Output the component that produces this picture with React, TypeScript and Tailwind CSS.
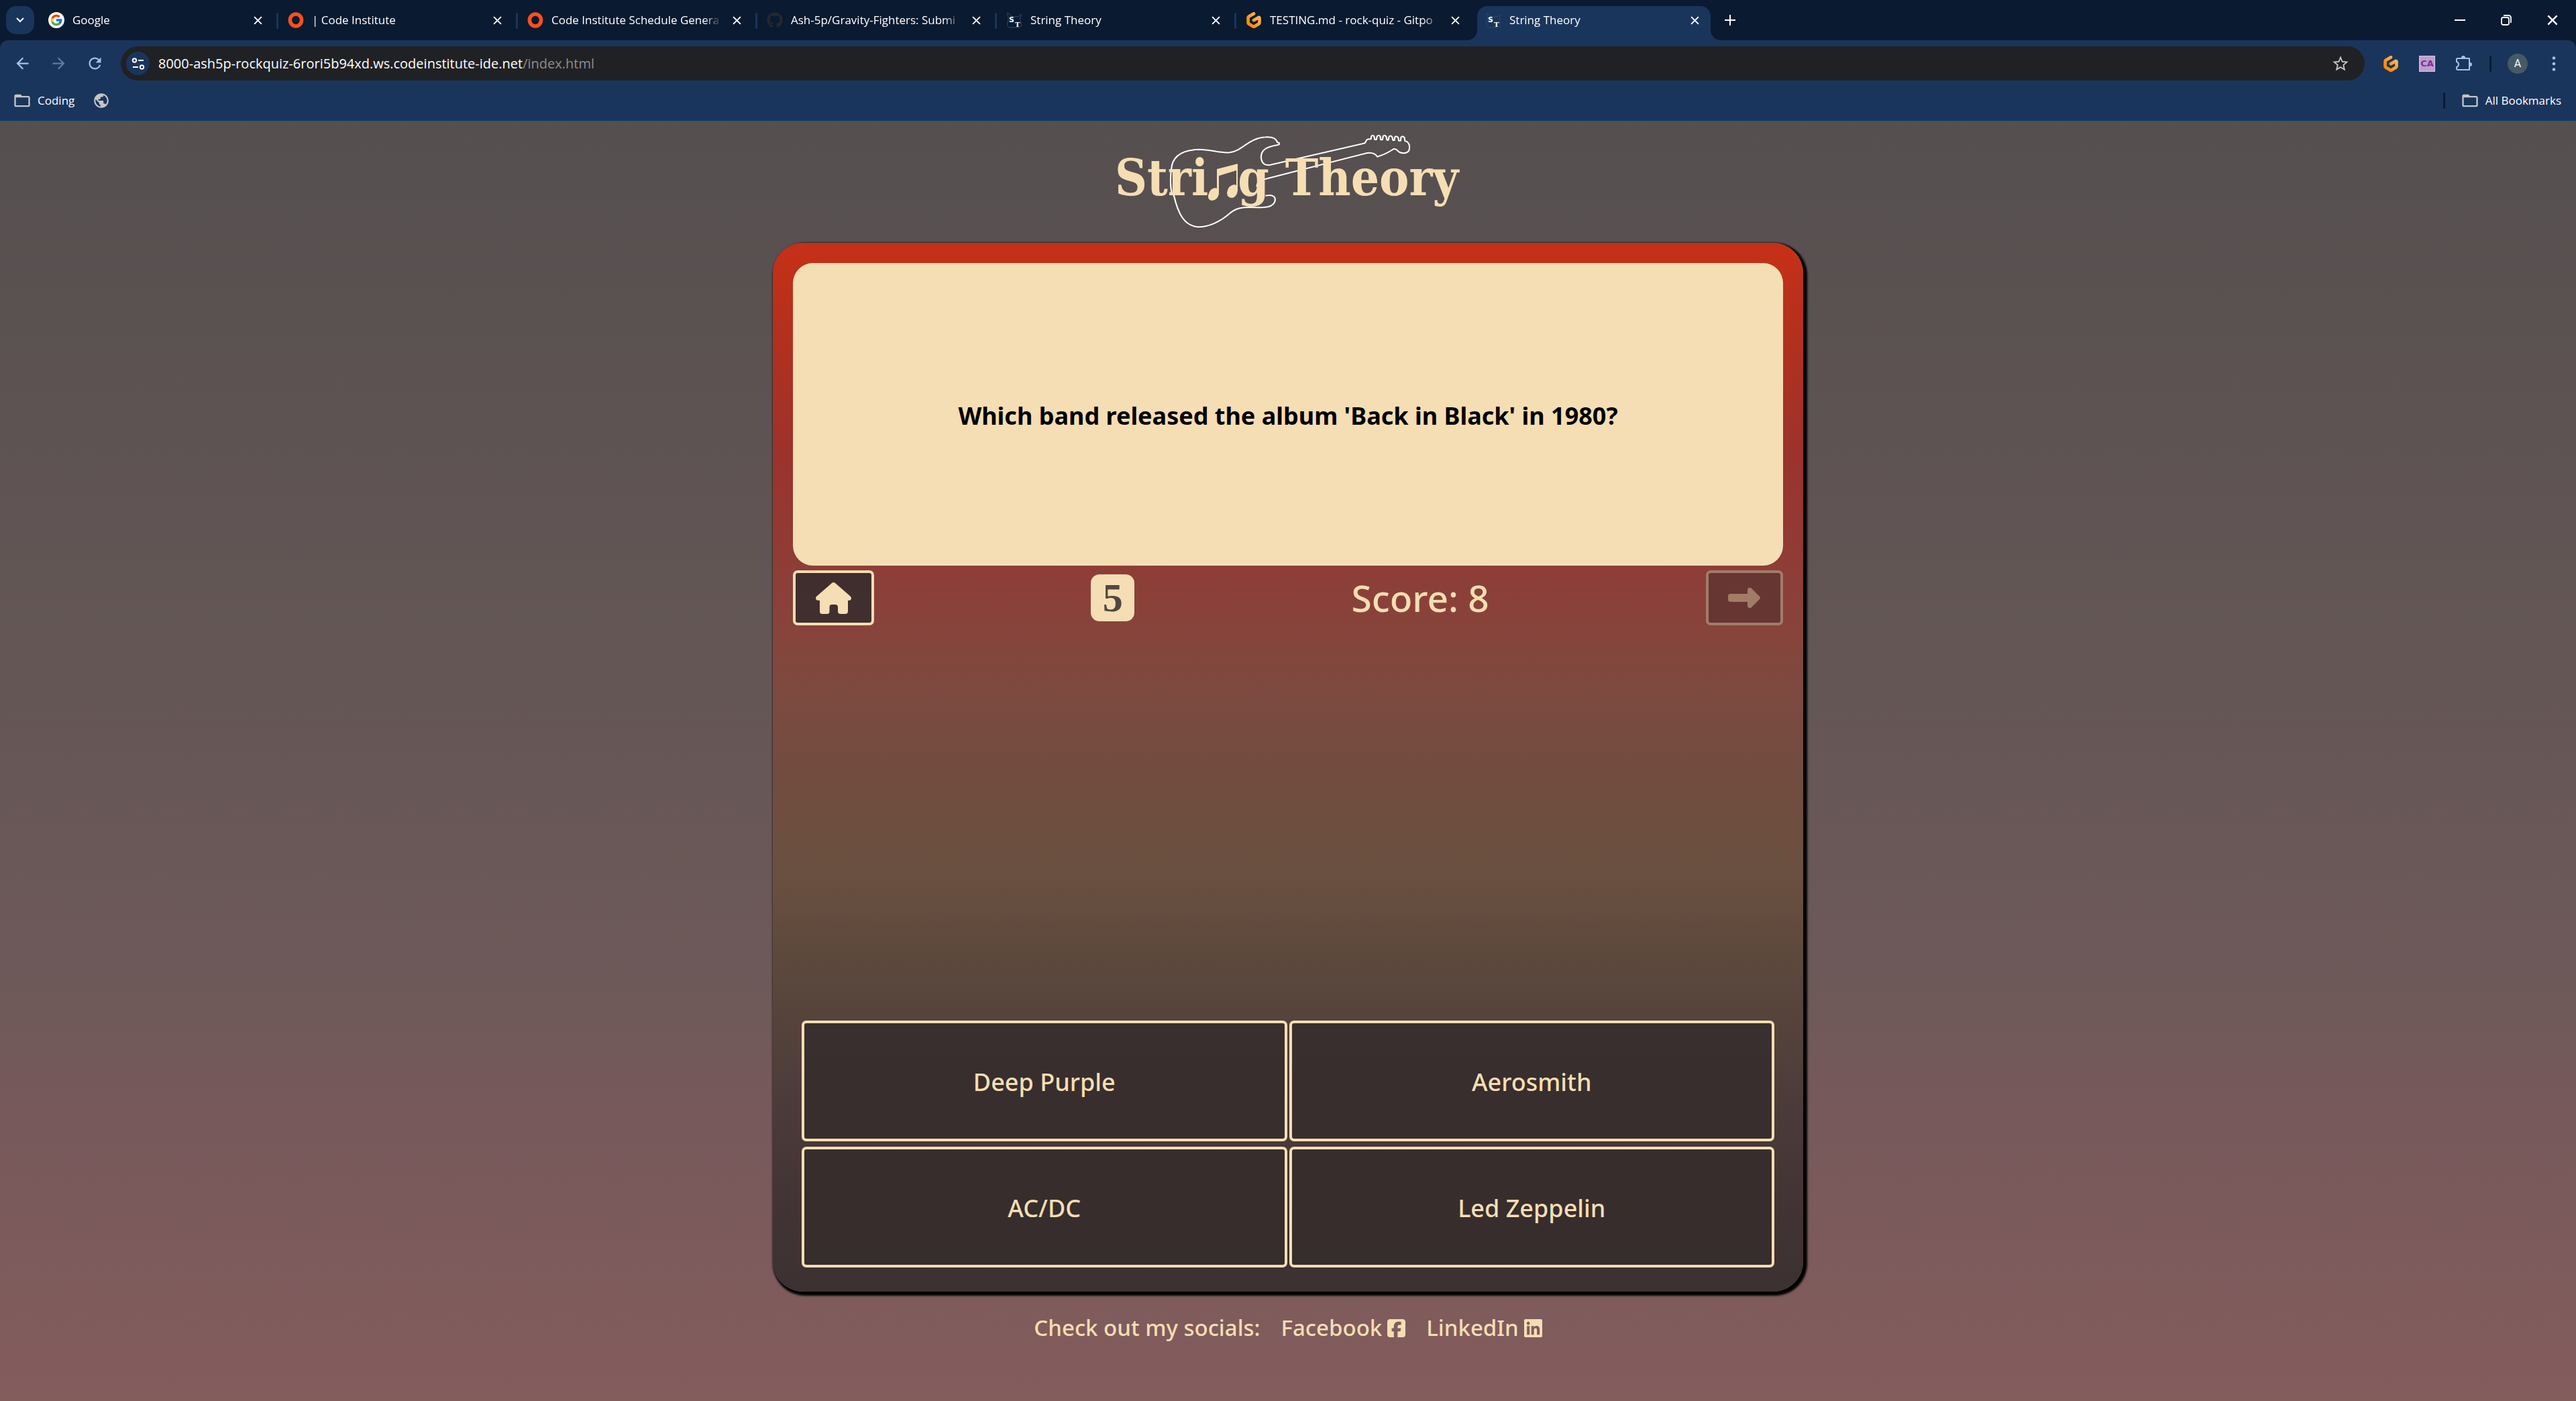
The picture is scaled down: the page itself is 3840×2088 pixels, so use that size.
import React from "react";
import { FcGoogle } from "react-icons/fc";
import { FaGithub, FaLinkedin, FaSquareFacebook } from "react-icons/fa6";
import { SiGitpod } from "react-icons/si";
import {
  MdArrowBack,
  MdArrowForward,
  MdFolderOpen,
  MdPublic,
  MdRefresh,
  MdStarBorder,
} from "react-icons/md";

type IconName = "google" | "ring" | "github" | "guitar" | "gitpod";

const tabs: { title: string; icon: IconName; active?: boolean }[] = [
  { title: "Google", icon: "google" },
  { title: "| Code Institute", icon: "ring" },
  { title: "Code Institute Schedule Genera", icon: "ring" },
  { title: "Ash-5p/Gravity-Fighters: Submi", icon: "github" },
  { title: "String Theory", icon: "guitar" },
  { title: "TESTING.md - rock-quiz - Gitpo", icon: "gitpod" },
  { title: "String Theory", icon: "guitar", active: true },
];

const answers = ["Deep Purple", "Aerosmith", "AC/DC", "Led Zeppelin"];

function Gitpod() {
  return (
    <span className="flex shrink-0">
      <svg width="0" height="0" aria-hidden="true">
        <linearGradient id="gitpod" x1="1" y1="0" x2="0" y2="1">
          <stop offset="0.2" stopColor="#ffb45b" />
          <stop offset="0.8" stopColor="#ff8a00" />
        </linearGradient>
      </svg>
      <SiGitpod className="size-6" fill="url(#gitpod)" />
    </span>
  );
}

function TabIcon({ name }: { name: IconName }) {
  if (name === "google")
    return (
      <span className="flex size-6 shrink-0 items-center justify-center rounded-full bg-white">
        <FcGoogle className="size-5" />
      </span>
    );
  if (name === "ring")
    return (
      <svg viewBox="0 0 24 24" className="size-6 shrink-0" aria-hidden="true">
        <ellipse cx="12" cy="12" rx="8.6" ry="9" fill="none" stroke="#fb4f1e" strokeWidth="5.6" />
      </svg>
    );
  if (name === "github") return <FaGithub className="size-6 shrink-0 text-[#24292e]" />;
  if (name === "gitpod") return <Gitpod />;
  return (
    <svg viewBox="0 0 24 24" className="size-6 shrink-0" aria-hidden="true">
      <path
        d="M2 1q-1 4 1 6 1 3-1 8-2 8 4 8h12q6 0 4-8-2-4-1-7 2-3 1-5-2 4-5 4-3-1-4 0-3 1-5-1-3-2-6-5z"
        fill="none"
        stroke="#33486a"
        strokeWidth="1"
      />
      <text x="4" y="15" fontSize="11" fontWeight="700" fill="#fff" fontFamily="DejaVu Sans, sans-serif">
        S
      </text>
      <text x="13" y="22" fontSize="10" fontWeight="700" fill="#fff" fontFamily="DejaVu Serif, serif">
        T
      </text>
    </svg>
  );
}

function Cross({ className }: { className: string }) {
  return (
    <svg viewBox="0 0 12 12" className={className} aria-hidden="true">
      <path d="M1 1l10 10M11 1L1 11" stroke="currentColor" strokeWidth="1.8" fill="none" />
    </svg>
  );
}

function Flare({ className }: { className: string }) {
  return (
    <svg viewBox="0 0 15 15" className={className} aria-hidden="true">
      <path d="M15 0v15H0A15 15 0 0 0 15 0z" fill="#1a355b" />
    </svg>
  );
}

function TabStrip() {
  return (
    <div className="flex h-[60px] items-end">
      <button
        aria-label="Search tabs"
        className="mr-[4px] mb-[9px] ml-[9px] flex size-[42px] shrink-0 items-center justify-center rounded-[15px] bg-[#1a355b]"
      >
        <svg viewBox="0 0 12 8" className="h-2 w-3" aria-hidden="true">
          <path d="M1 1l5 5 5-5" stroke="currentColor" strokeWidth="2" fill="none" />
        </svg>
      </button>
      <nav className="flex min-w-0">
        {tabs.map((tab, i) => (
          <div
            key={i}
            className={
              "relative flex h-[51px] w-[357px] items-center pb-[9px] " +
              (tab.active ? "pl-[5px]" : "pl-[17px]")
            }
          >
            {i > 0 && !tab.active && (
              <span className="absolute top-[10px] left-0 h-[24px] w-[3px] rounded bg-[#1a355b]" />
            )}
            <div
              className={
                tab.active
                  ? "relative mr-[4px] -mb-[9px] flex h-[51px] min-w-0 flex-1 items-center rounded-t-[15px] bg-[#1a355b] pr-[17px] pb-[9px] pl-[12px]"
                  : "flex min-w-0 flex-1 items-center pr-[21px]"
              }
            >
              {tab.active && <Flare className="absolute bottom-0 -left-[15px] size-[15px]" />}
              {tab.active && <Flare className="absolute -right-[15px] bottom-0 size-[15px] -scale-x-100" />}
              <TabIcon name={tab.icon} />
              <a
                href="#tab"
                className="mr-[16px] ml-[12px] min-w-0 flex-1 overflow-hidden text-[17px] leading-6 whitespace-nowrap [mask-image:linear-gradient(to_right,#000_calc(100%-26px),transparent)]"
              >
                {tab.title}
              </a>
              <button aria-label={"Close " + tab.title}>
                <Cross className="size-[13px]" />
              </button>
            </div>
          </div>
        ))}
      </nav>
      <button aria-label="New tab" className="mb-[22px] ml-[17px]">
        <svg viewBox="0 0 16 16" className="size-4" aria-hidden="true">
          <path d="M8 0v16M0 8h16" stroke="currentColor" strokeWidth="2" />
        </svg>
      </button>
      <div className="mr-[27px] mb-[22px] ml-auto flex items-center gap-[53px]">
        <button aria-label="Minimise">
          <svg viewBox="0 0 16 16" className="size-4" aria-hidden="true">
            <path d="M0 8h16" stroke="currentColor" strokeWidth="2" />
          </svg>
        </button>
        <button aria-label="Restore">
          <svg viewBox="0 0 16 16" className="size-4" aria-hidden="true">
            <rect x="1" y="4" width="11" height="11" rx="2.5" fill="none" stroke="currentColor" strokeWidth="1.8" />
            <path d="M4 1.5Q5 1 6 1h5q4 0 4 4v5q0 1-.6 2" fill="none" stroke="currentColor" strokeWidth="1.8" />
          </svg>
        </button>
        <button aria-label="Close window">
          <Cross className="size-4" />
        </button>
      </div>
    </div>
  );
}

function AddressBar() {
  return (
    <div className="flex h-[69px] items-center rounded-t-[12px] bg-[#1a355b] pr-[26px] pl-[20px] text-[#a8c0e8]">
      <button aria-label="Back">
        <MdArrowBack className="size-[27px]" />
      </button>
      <button aria-label="Forward" className="ml-[27px] text-[#5f7aa3]">
        <MdArrowForward className="size-[27px]" />
      </button>
      <button aria-label="Reload" className="ml-[27px]">
        <MdRefresh className="size-[27px]" />
      </button>
      <div className="ml-[25px] flex h-[51px] min-w-0 flex-1 items-center rounded-full bg-[#202124] pr-[22px] pl-[8px]">
        <button
          aria-label="Site information"
          className="flex size-[35px] shrink-0 items-center justify-center rounded-full bg-[#1a355b] text-white"
        >
          <svg viewBox="0 0 20 18" className="h-[18px] w-5" fill="none" stroke="currentColor" strokeWidth="2" aria-hidden="true">
            <circle cx="4.500" cy="4" r="2.700" />
            <path d="M10 4h8M2 14h8" />
            <circle cx="15.500" cy="14" r="2.700" />
          </svg>
        </button>
        <a href="#address" className="ml-[13px] text-[20px] leading-7 text-[#8b8e92]">
          <span className="text-white">8000-ash5p-rockquiz-6rori5b94xd.ws.codeinstitute-ide.net</span>/index.html
        </a>
        <button aria-label="Bookmark this page" className="ml-auto text-[#c4c5c7]">
          <MdStarBorder className="size-7" />
        </button>
      </div>
      <button aria-label="Gitpod" className="ml-[27px]">
        <Gitpod />
      </button>
      <button
        aria-label="CA extension"
        className="ml-[30px] flex size-6 items-center justify-center border border-[#d9c3e6] bg-[#bc9fce] font-['DejaVu_Sans'] text-[13px] font-bold text-[#7b2d96]"
      >
        CA
      </button>
      <button aria-label="Extensions" className="ml-[30px]">
        <svg viewBox="0 0 26 26" className="size-[26px]" fill="none" stroke="currentColor" strokeWidth="2" aria-hidden="true">
          <path d="M4 5H21V22H4Q2 22 2 20V18Q5 17 5 14 5 11 2 10V6Q2 5 4 5z" strokeLinejoin="round" />
          <path d="M9 4a3 3 0 0 1 6 0zM22 11a3 3 0 0 1 0 6z" fill="currentColor" stroke="none" />
        </svg>
      </button>
      <span className="ml-[25px] h-6 w-[3px] rounded bg-[#0a1a31]" />
      <button
        aria-label="Profile"
        className="ml-[24px] flex size-[30px] items-center justify-center rounded-full bg-[#455a64] font-['Roboto'] text-[16px] text-white"
      >
        A
      </button>
      <button aria-label="Menu" className="ml-[32px]">
        <svg viewBox="0 0 14 24" className="h-6 w-[14px]" fill="currentColor" aria-hidden="true">
          <circle cx="7" cy="3.500" r="2.300" />
          <circle cx="7" cy="12" r="2.300" />
          <circle cx="7" cy="20.500" r="2.300" />
        </svg>
      </button>
    </div>
  );
}

function Bookmarks() {
  return (
    <div className="flex h-[51px] items-center bg-[#1a355b] pr-[22px] pb-[9px] pl-[19px] text-[17px] leading-6">
      <a href="#coding" className="flex items-center gap-[9px]">
        <MdFolderOpen className="size-7 text-[#c4c5c7]" />
        Coding
      </a>
      <a href="#web" aria-label="Website" className="ml-[27px]">
        <MdPublic className="size-[26px] text-[#c4c5c7]" />
      </a>
      <span className="ml-auto h-6 w-[3px] rounded bg-[#0a1a31]" />
      <a href="#bookmarks" className="ml-[23px] flex items-center gap-[9px]">
        <MdFolderOpen className="size-7 text-[#c4c5c7]" />
        All Bookmarks
      </a>
    </div>
  );
}

function Logo() {
  return (
    <h1
      aria-label="String Theory"
      className="relative flex h-[181px] w-[560px] pt-[48px] pl-[22px] font-['DejaVu_Serif_Condensed','DejaVu_Serif',serif] text-[74px] leading-[73px] font-bold text-[#f5deb3]"
    >
      <svg
        viewBox="0 0 1568 540"
        preserveAspectRatio="none"
        className="absolute top-0 left-0 h-[180px] w-[560px]"
        fill="none"
        stroke="#fff"
        strokeWidth="6"
        strokeLinejoin="round"
        aria-hidden="true"
      >
        <path d="M654 292C655 275 660 262 690 257L1115 141Q1145 138 1157 158Q1195 145 1225 123C1240 120 1240 134 1250 138C1268 146 1288 140 1290 125C1294 108 1288 90 1272 87L1270 72Q1262 62 1256 70L1254 86H1246L1244 72Q1236 62 1230 70L1228 84H1222L1219 70Q1212 60 1206 68L1203 83H1197L1194 68Q1187 58 1181 66L1178 82H1171L1169 67Q1162 58 1156 66L1153 81H1146L1143 66Q1137 58 1132 66L1130 79Q1112 76 1110 88L1105 97L710 194C690 198 676 190 672 165C668 125 700 113 738 106L747 103V96L740 94C735 75 715 68 690 70C620 74 590 134 540 139C490 142 470 125 410 125C340 128 300 155 297 215C292 250 293 300 300 322L308 332C325 410 350 468 410 472C450 472 500 450 540 412C565 388 590 380 655 385C690 385 722 385 730 355C733 333 716 327 690 332" />
      </svg>
      <span className="relative">Stri</span>
      <svg viewBox="0 0 44 55" className="relative mt-[15px] h-[55px] w-[44px] shrink-0" fill="currentColor" aria-hidden="true">
        <path d="M13 8L44 0V40Q43 49 36 51Q28 51 28 43Q30 32 39 31L42 32V10L16 18V45Q14 54 6 55Q-1 54 0 47Q3 36 11 36L13 37z" />
      </svg>
      <span className="relative">g</span>
      <span className="relative ml-6">Theory</span>
    </h1>
  );
}

function Question() {
  return (
    <section className="flex min-h-[451px] items-center justify-center rounded-[30px] bg-[#f5deb3] px-8 pt-1 text-center">
      <h2 className="text-[36px] leading-[48px] font-bold text-black">
        Which band released the album 'Back in Black' in 1980?
      </h2>
    </section>
  );
}

function Controls() {
  return (
    <div className="mt-[7px] flex items-center justify-between">
      <button
        aria-label="Home"
        className="flex h-[82px] w-[121px] items-center justify-center rounded-[7px] border-4 border-[#f5deb3] bg-[#362c2c]/88 bg-clip-padding"
      >
        <svg viewBox="0 0 53 47" className="h-[47px] w-[53px]" fill="currentColor" aria-hidden="true">
          <path d="M24 1Q26.500-1 29 1L52 21Q54 24 52 26 51 27 48 27V43Q48 47 44 47H37Q33 47 33 43V37Q33 33 29 33H24Q20.500 33 20.500 37V43Q20.500 47 17 47H9.500Q6 47 6 43V27Q2 27 1 26-1 24 1 21z" />
        </svg>
      </button>
      <span className="flex h-[70px] w-[65px] items-center justify-center rounded-[13px] bg-[#f5deb3] font-['Liberation_Serif',serif] text-[60px] leading-none font-bold text-[#514741]">
        5
      </span>
      <p className="text-[55px] leading-[72px] font-medium">Score: 8</p>
      <button
        aria-label="Next question"
        disabled
        className="flex h-[82px] w-[115px] items-center justify-center rounded-[7px] border-4 border-[#a27c66] bg-[#663633] text-[#a27c66]"
      >
        <svg viewBox="0 0 48 30" className="h-[30px] w-12" fill="currentColor" aria-hidden="true">
          <path d="M4 9H29V3Q29 1 31 0H34L47 13Q48.500 15 47 17L34 30H31Q29 29 29 27V21H4Q0 21 0 18V12Q0 9 4 9z" />
        </svg>
      </button>
    </div>
  );
}

export default function App() {
  return (
    <div className="flex min-h-screen flex-col bg-[#0a1a31] font-['Open_Sans','Noto_Sans',sans-serif] text-white">
      <header className="border-b border-[#33507e]">
        <TabStrip />
        <AddressBar />
        <Bookmarks />
      </header>
      <div className="flex flex-1 flex-col items-center bg-[linear-gradient(#554f4f,#635655_40%,#6e5959_68%,#77595b_77%,#835c5c)] font-['Noto_Sans',sans-serif] text-[#f5deb3]">
        <Logo />
        <main className="flex min-h-[1563px] w-2/5 flex-col rounded-[45px] bg-[linear-gradient(#c63017,#b9301a_6%,#9c322c_20%,#8e3d37_31%,#85453c_38%,#7b4a40_44%,#734c3f_50%,#6a5040_60%,#624b3e_65%,#59463c_71%,#4c3b3a_82%,#413334_93%,#3c3131)] p-[30px] pb-[36px] shadow-[3px_3px_3px_3px_#000]">
          <Question />
          <Controls />
          <div className="mx-[13px] mt-auto grid grid-cols-2 gap-x-[3px] gap-y-2">
            {answers.map((answer) => (
              <button
                key={answer}
                className="h-[180px] rounded-[7px] border-4 border-[#f5deb3] bg-[#362c2c]/88 bg-clip-padding pt-1 text-[36px] leading-[48px] font-medium"
              >
                {answer}
              </button>
            ))}
          </div>
        </main>
        <footer className="flex items-center gap-[31px] pt-[30px] text-[33px] leading-[48px] font-medium">
          <p>Check out my socials:</p>
          <a href="#facebook" className="flex items-center gap-2">
            Facebook
            <FaSquareFacebook className="h-[31px] w-[27px]" />
          </a>
          <a href="#linkedin" className="flex items-center gap-2">
            LinkedIn
            <FaLinkedin className="h-[31px] w-[27px]" />
          </a>
        </footer>
      </div>
    </div>
  );
}
